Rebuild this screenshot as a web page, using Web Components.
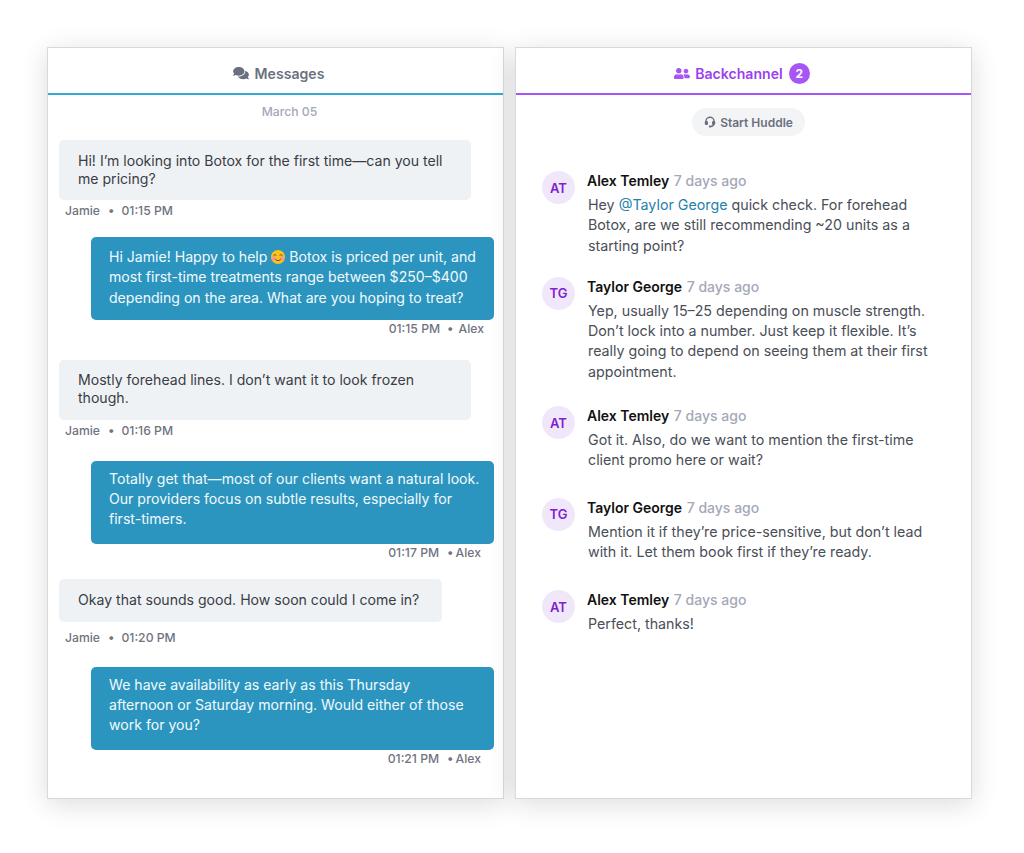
<!DOCTYPE html>
<html>
<head>
<meta charset="utf-8">
<title>Messages</title>
<style>
    html, body { margin: 0; background: #fff; }
    body { font-family: Inter, "Noto Sans", sans-serif; }
    main-board { height: 853px; }
</style>
</head>
<body>
<main-board>
    <chat-panel title-text="Messages" accent="#38a8d4" color="#6b7080" nudge="6">
        <svg slot="icon" width="16" height="14" viewBox="0 0 576 512" fill="currentColor" style="margin-right:1px"><path d="M416 192c0-88.4-93.1-160-208-160S0 103.6 0 192c0 34.3 14.1 65.9 38 92-13.4 30.2-35.5 54.2-35.8 54.5-2.2 2.3-2.8 5.7-1.5 8.7S4.8 352 8 352c36.6 0 66.9-12.3 88.7-25 32.2 15.7 70.3 25 111.3 25 114.9 0 208-71.6 208-160zm122 220c23.9-26 38-57.7 38-92 0-66.9-53.5-124.2-129.3-148.1.9 6.6 1.3 13.3 1.3 20.1 0 105.9-107.7 192-240 192-10.8 0-21.3-.8-31.7-1.9C207.8 439.6 281.8 480 368 480c41 0 79.1-9.2 111.3-25 21.8 12.7 52.1 25 88.7 25 3.2 0 6.1-1.9 7.3-4.8 1.3-2.9.7-6.3-1.5-8.7-.3-.3-22.4-24.2-35.8-54.5z"/></svg>
        <message-list>
            <chat-bubble kind="in" who="Jamie" time="01:15 PM" width="412" after="18">Hi! I’m looking into Botox for the first time—can you tell me pricing?</chat-bubble>
            <chat-bubble kind="out" who="Alex" time="01:15 PM" after="23">Hi Jamie! Happy to help <smile-face></smile-face> Botox is priced per unit, and most first-time treatments range between $250–$400 depending on the area. What are you hoping to treat?</chat-bubble>
            <chat-bubble kind="in" who="Jamie" time="01:16 PM" width="412" after="22">Mostly forehead lines. I don’t want it to look frozen though.</chat-bubble>
            <chat-bubble kind="out" who="Alex" time="01:17 PM" inset="13" tight after="18">Totally get that—most of our clients want a natural look. Our providers focus on subtle results, especially for first-timers.</chat-bubble>
            <chat-bubble kind="in" who="Jamie" time="01:20 PM" width="383" single gap="8" after="21">Okay that sounds good. How soon could I come in?</chat-bubble>
            <chat-bubble kind="out" who="Alex" time="01:21 PM" inset="13" tight>We have availability as early as this Thursday<br>afternoon or Saturday morning. Would either of those work for you?</chat-bubble>
        </message-list>
    </chat-panel>
    <chat-panel title-text="Backchannel" accent="#a855f7" color="#9a3ff0" badge="2" nudge="-3">
        <svg slot="icon" width="16" height="13" viewBox="0 0 640 512" fill="#a855f7"><path d="M192 256c61.9 0 112-50.1 112-112S253.9 32 192 32 80 82.1 80 144s50.1 112 112 112zm76.8 32h-8.3c-20.8 10-43.9 16-68.5 16s-47.6-6-68.5-16h-8.3C51.6 288 0 339.6 0 403.2V432c0 26.5 21.5 48 48 48h288c26.5 0 48-21.5 48-48v-28.8c0-63.6-51.6-115.2-115.2-115.2zM480 256c53 0 96-43 96-96s-43-96-96-96-96 43-96 96 43 96 96 96zm48 32h-3.8c-13.9 4.8-28.6 8-44.2 8s-30.3-3.2-44.2-8H432c-20.4 0-39.2 5.9-55.7 15.4 24.4 26.3 39.7 61.2 39.7 99.8v38.4c0 2.2-.5 4.3-.6 6.4H592c26.5 0 48-21.5 48-48 0-61.9-50.1-112-112-112z"/></svg>
        <channel-list>
            <huddle-button>Start Huddle</huddle-button>
            <channel-note initials="AT" who="Alex Temley" when="7 days ago" after="21">Hey <at-mention>@Taylor George</at-mention> quick check. For forehead Botox, are we still recommending ~20 units as a starting point?</channel-note>
            <channel-note initials="TG" who="Taylor George" when="7 days ago" after="24">Yep, usually 15–25 depending on muscle strength. Don’t lock into a number. Just keep it flexible. It’s really going to depend on seeing them at their first appointment.</channel-note>
            <channel-note initials="AT" who="Alex Temley" when="7 days ago" after="27">Got it. Also, do we want to mention the first-time client promo here or wait?</channel-note>
            <channel-note initials="TG" who="Taylor George" when="7 days ago" after="28">Mention it if they’re price-sensitive, but don’t lead with it. Let them book first if they’re ready.</channel-note>
            <channel-note initials="AT" who="Alex Temley" when="7 days ago">Perfect, thanks!</channel-note>
        </channel-list>
    </chat-panel>
</main-board>

<script>
class MainBoard extends HTMLElement {
    constructor() {
        super();
        this.attachShadow({ mode: "open" });
        this.shadowRoot.innerHTML = `
            <style>
                :host { display: flex; gap: 11px; padding: 47px 52px 0 47px; box-sizing: border-box; width: 1024px; }
                ::slotted(*) { flex: 0 0 457px; }
            </style>
            <slot></slot>
        `;
    }
}

class ChatPanel extends HTMLElement {
    constructor() {
        super();
        this.attachShadow({ mode: "open" });
    }

    connectedCallback() {
        const accent = this.getAttribute("accent");
        const color = this.getAttribute("color");
        const badge = this.getAttribute("badge");
        const nudge = Number(this.getAttribute("nudge") || 0);
        this.shadowRoot.innerHTML = `
            <style>
                :host {
                    display: block;
                    box-sizing: border-box;
                    height: 752px;
                    background: #fff;
                    border: 1px solid #d9d9d9;
                    box-shadow: 0 5px 26px rgba(0, 0, 0, .14);
                }
                header {
                    display: flex;
                    align-items: center;
                    justify-content: center;
                    gap: 5px;
                    box-sizing: border-box;
                    height: 47px;
                    padding: 5px ${nudge < 0 ? -nudge : 0}px 0 ${nudge > 0 ? nudge : 0}px;
                    border-bottom: 2px solid ${accent};
                    color: ${color};
                    font-size: 14.1px;
                    font-weight: 600;
                }
                .ico { display: flex; }
                .badge {
                    display: grid;
                    place-items: center;
                    width: 21px;
                    height: 21px;
                    margin-left: 1px;
                    border-radius: 50%;
                    background: ${accent};
                    color: #fff;
                    font-size: 12px;
                    font-weight: 700;
                }
            </style>
            <header>
                <span class="ico"><slot name="icon"></slot></span>
                <span>${this.getAttribute("title-text")}</span>
                ${badge ? `<span class="badge">${badge}</span>` : ""}
            </header>
            <slot></slot>
        `;
    }
}

class MessageList extends HTMLElement {
    constructor() {
        super();
        this.attachShadow({ mode: "open" });
        this.shadowRoot.innerHTML = `
            <style>
                :host { display: flex; flex-direction: column; padding: 9px 9px 0 11px; }
                .date {
                    height: 16px;
                    margin-bottom: 20px;
                    padding-left: 26px;
                    text-align: center;
                    font-size: 12.2px;
                    line-height: 16px;
                    font-weight: 500;
                    color: #a4a8b8;
                }
            </style>
            <div class="date">March 05</div>
            <slot></slot>
        `;
    }
}

class ChatBubble extends HTMLElement {
    constructor() {
        super();
        this.attachShadow({ mode: "open" });
    }

    connectedCallback() {
        const out = this.getAttribute("kind") === "out";
        const who = this.getAttribute("who");
        const time = this.getAttribute("time");
        const width = this.getAttribute("width") || 403;
        const inset = this.getAttribute("inset") || 10;
        const tight = this.hasAttribute("tight");
        const single = this.hasAttribute("single");
        const gap = this.getAttribute("gap") || (out ? 1 : 3);
        const outPad = tight ? "8px 14px 14px 18px" : "10px 14px 12px 18px";
        const inPad = single ? "12px 19px 13px" : "11.5px 19px 12.5px";
        const dot = !out ? "0 7px 0 8px" : tight ? "0 2px 0 8px" : "0 5px 0 7px";
        this.shadowRoot.innerHTML = `
            <style>
                :host {
                    display: flex;
                    flex-direction: column;
                    align-items: ${out ? "flex-end" : "flex-start"};
                    margin-bottom: ${this.getAttribute("after") || 0}px;
                }
                .bubble {
                    box-sizing: border-box;
                    width: ${width}px;
                    padding: ${out ? outPad : inPad};
                    border-radius: 5px;
                    font-size: 14.08px;
                    line-height: ${out ? 20.3 : 18}px;
                    background: ${out ? "#2b95bf" : "#eff2f5"};
                    color: ${out ? "#f2fafd" : "#3a3d45"};
                }
                .meta {
                    display: flex;
                    margin-top: ${gap}px;
                    padding: 0 ${out ? inset + "px" : "0"} 0 ${out ? "0" : "6px"};
                    font-size: 12.2px;
                    line-height: 16px;
                    font-weight: 500;
                    color: #6f7382;
                }
                .dot { margin: ${dot}; }
            </style>
            <div class="bubble"><slot></slot></div>
            <div class="meta">
                ${out ? `<span>${time}</span><span class="dot">•</span><span>${who}</span>`
                      : `<span>${who}</span><span class="dot">•</span><span>${time}</span>`}
            </div>
        `;
    }
}

class SmileFace extends HTMLElement {
    constructor() {
        super();
        this.attachShadow({ mode: "open" });
        this.shadowRoot.innerHTML = `
            <style>
                :host { display: inline-block; width: 14px; height: 14px; vertical-align: -2px; }
                svg { display: block; }
            </style>
            <svg width="14" height="14" viewBox="0 0 14 14">
                <circle cx="7" cy="7" r="7" fill="#fcc21b"/>
                <circle cx="2.8" cy="8.4" r="2.2" fill="#f7988f"/>
                <circle cx="11.2" cy="8.4" r="2.2" fill="#f7988f"/>
                <path d="M2.6 5.6c.5-1.3 2.1-1.3 2.6 0M8.8 5.6c.5-1.3 2.1-1.3 2.6 0" fill="none" stroke="#6a4a2a" stroke-width="1"/>
                <path d="M4.2 9.2c1.4 1.8 4.2 1.8 5.6 0" fill="none" stroke="#6a4a2a" stroke-width="1"/>
            </svg>
        `;
    }
}

class ChannelList extends HTMLElement {
    constructor() {
        super();
        this.attachShadow({ mode: "open" });
        this.shadowRoot.innerHTML = `
            <style>
                :host { display: flex; flex-direction: column; padding: 13px 26px 0; }
            </style>
            <slot></slot>
        `;
    }
}

class HuddleButton extends HTMLElement {
    constructor() {
        super();
        this.attachShadow({ mode: "open" });
        this.shadowRoot.innerHTML = `
            <style>
                :host {
                    display: flex;
                    align-items: center;
                    gap: 4px;
                    align-self: center;
                    box-sizing: border-box;
                    height: 28px;
                    margin: 0 0 35px 10px;
                    padding: 0 12px;
                    border-radius: 14px;
                    background: #f3f4f6;
                    color: #6b7080;
                    font-size: 12px;
                    font-weight: 600;
                }
                svg { display: block; }
            </style>
            <svg width="12" height="12" viewBox="0 0 12 12" fill="none" stroke="currentColor" stroke-width="1.4">
                <path d="M1.9 6.5V5.4a4.1 4.1 0 0 1 8.2 0v1.4c0 2.2-1.4 3.6-3.4 3.6"/>
                <rect x=".8" y="5" width="3.2" height="4" rx="1.2" fill="currentColor" stroke="none"/>
                <rect x="8" y="5" width="3.2" height="4" rx="1.2" fill="currentColor" stroke="none"/>
                <rect x="4.8" y="9.5" width="2.8" height="2" rx="1" fill="currentColor" stroke="none"/>
            </svg>
            <slot></slot>
        `;
    }
}

class ChannelNote extends HTMLElement {
    constructor() {
        super();
        this.attachShadow({ mode: "open" });
    }

    connectedCallback() {
        this.shadowRoot.innerHTML = `
            <style>
                :host {
                    display: grid;
                    grid-template-columns: 33px 1fr;
                    column-gap: 12px;
                    margin-bottom: ${this.getAttribute("after") || 0}px;
                    font-size: 14px;
                }
                .avatar {
                    display: grid;
                    place-items: center;
                    width: 33px;
                    height: 33px;
                    border-radius: 50%;
                    background: #f1e7fb;
                    color: #7e22ce;
                    font-size: 13px;
                    font-weight: 600;
                }
                .head { line-height: 20px; font-weight: 600; color: #111; }
                .head span { margin-left: 1px; font-weight: 500; color: #a4a8b8; }
                .text {
                    margin: 4px 0 0 1px;
                    font-size: 14.25px;
                    line-height: 20.3px;
                    color: #4a4e57;
                }
            </style>
            <div class="avatar">${this.getAttribute("initials")}</div>
            <div>
                <div class="head">${this.getAttribute("who")} <span>${this.getAttribute("when")}</span></div>
                <div class="text"><slot></slot></div>
            </div>
        `;
    }
}

class AtMention extends HTMLElement {
    constructor() {
        super();
        this.attachShadow({ mode: "open" });
        this.shadowRoot.innerHTML = `
            <style>:host { display: inline; color: #1f82ac; }</style>
            <slot></slot>
        `;
    }
}

customElements.define("main-board", MainBoard);
customElements.define("chat-panel", ChatPanel);
customElements.define("message-list", MessageList);
customElements.define("chat-bubble", ChatBubble);
customElements.define("smile-face", SmileFace);
customElements.define("channel-list", ChannelList);
customElements.define("huddle-button", HuddleButton);
customElements.define("channel-note", ChannelNote);
customElements.define("at-mention", AtMention);
</script>
</body>
</html>
